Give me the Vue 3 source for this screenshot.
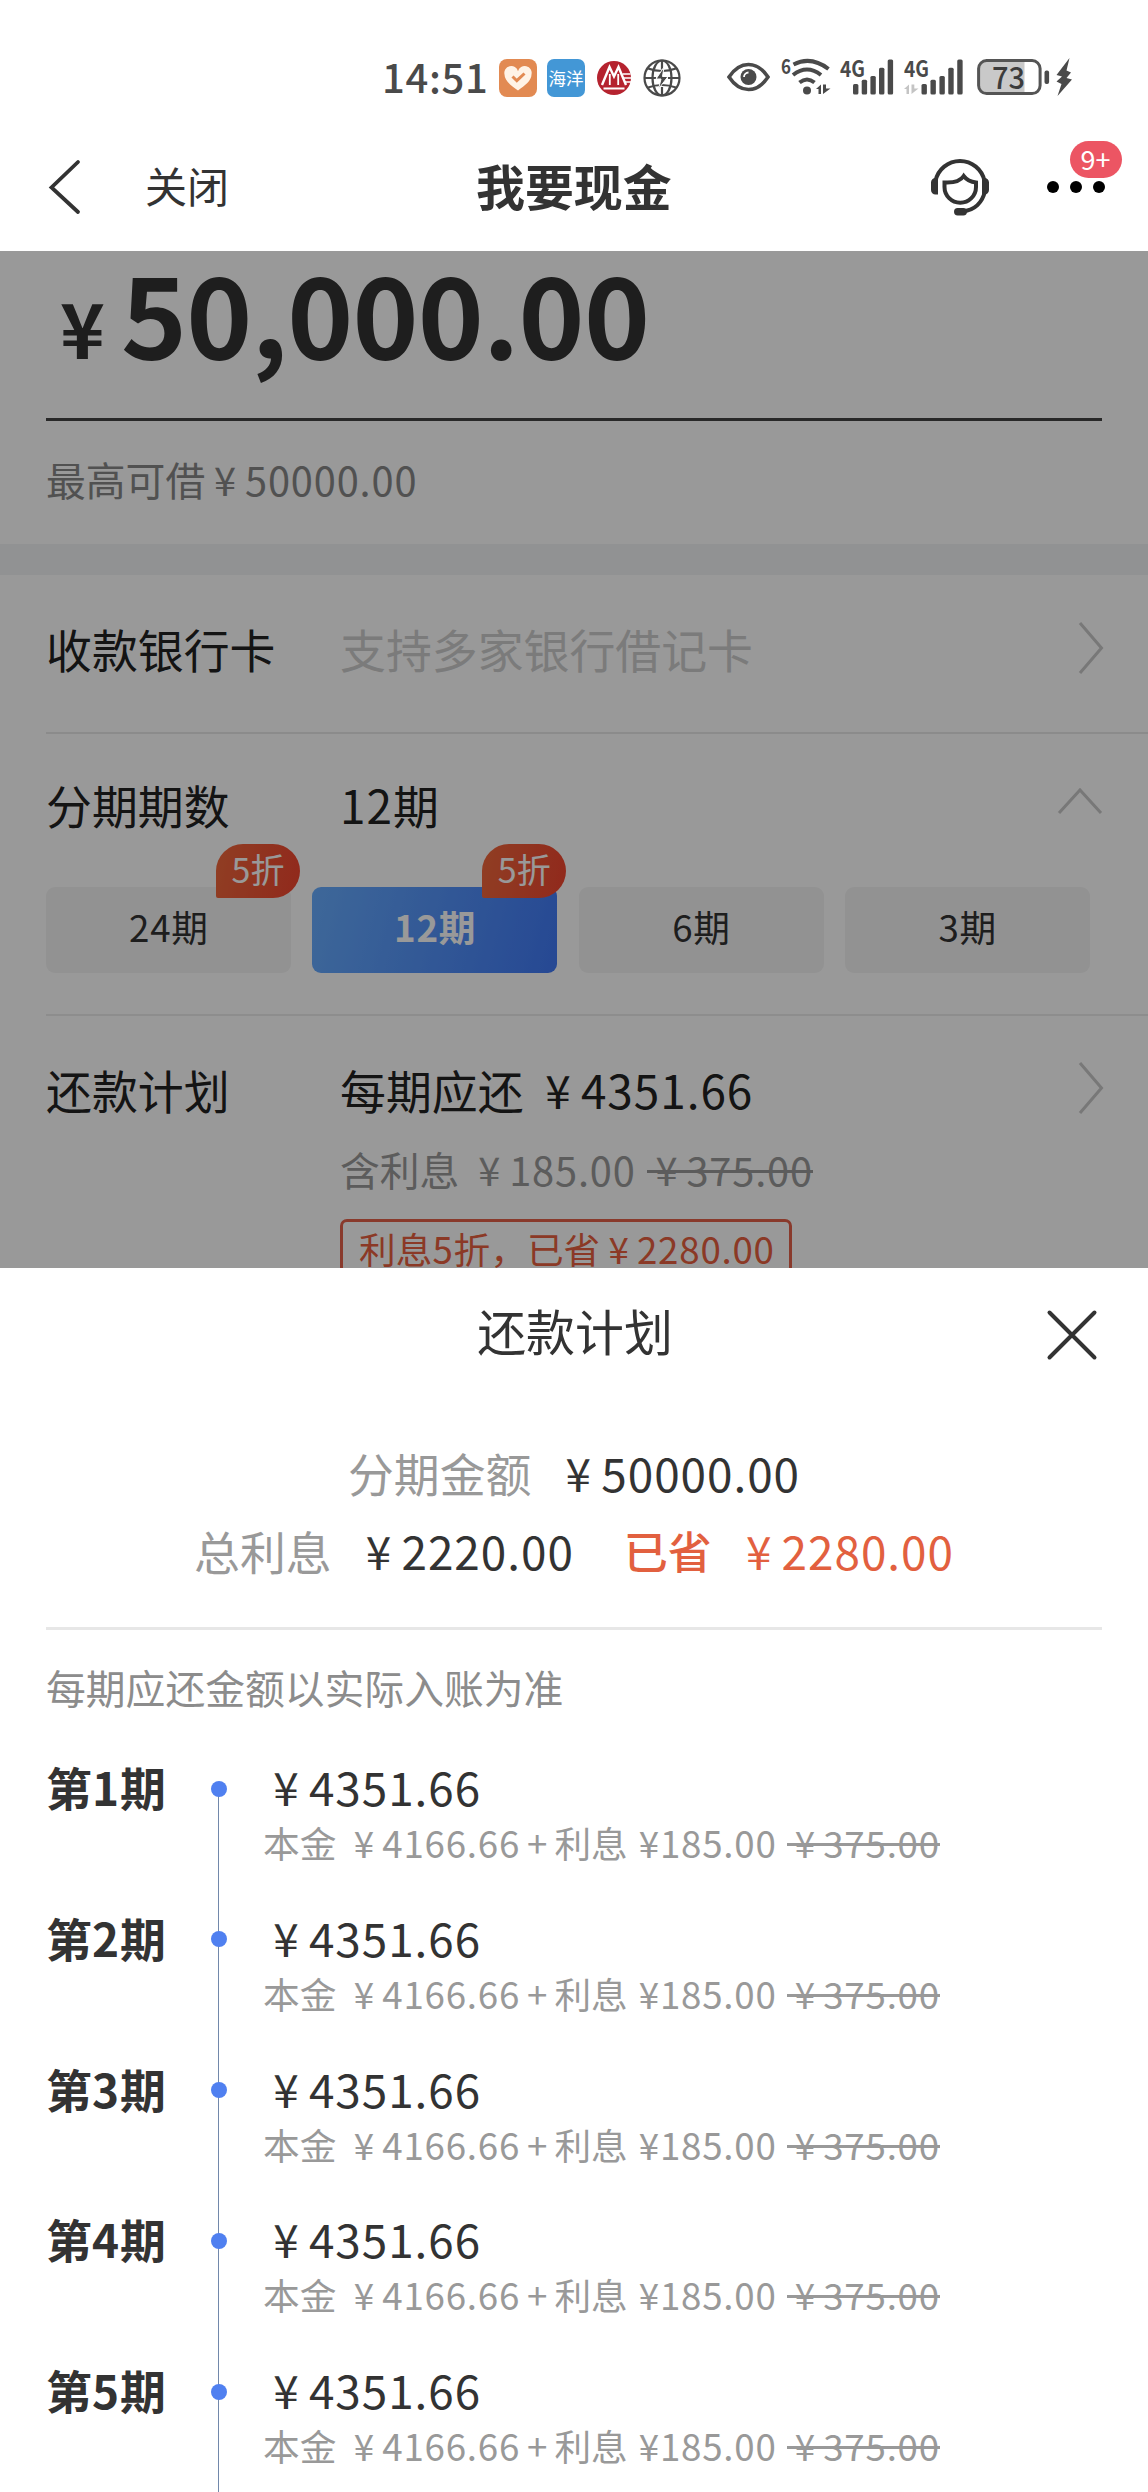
<script setup>
const terms = [
  { label: '24', off: true },
  { label: '12', off: true, active: true },
  { label: '6' },
  { label: '3' },
]
const bars = [
  [0, 24.6, 10.4],
  [8.7, 20.3, 14.7],
  [17.4, 16.6, 18.4],
  [26, 8.3, 26.7],
  [34.7, 0, 35],
]
const periods = [1, 2, 3, 4, 5]
</script>

<template>
  <div class="page">
    <header class="status">
      <span class="clock">14:51</span>
      <svg class="s-heart" width="38" height="38" viewBox="0 0 38 38">
        <rect width="38" height="38" rx="8" fill="#e28a52" />
        <path d="M19 31.5C12 26.5 5.5 21.5 5.5 15.500a6.800 6.800 0 0 1 13.500-3.200 6.800 6.800 0 0 1 13.500 3.200C32.500 21.500 26 26.500 19 31.500z" fill="#fff3e6" />
        <path d="M13.500 17.500l4.300 4.200 7.700-7.200" fill="none" stroke="#e28a52" stroke-width="3" />
      </svg>
      <span class="s-ocean">海洋</span>
      <svg class="s-bank" width="34" height="34" viewBox="0 0 34 34">
        <circle cx="17" cy="17" r="17" fill="#b5232f" />
        <path d="M5 24L12.500 6l4.500 9.500L21.500 6 29 24" fill="none" stroke="#fff" stroke-width="2.400" />
        <path d="M6.500 27.500h21M12.800 13v11M21.200 13v11" fill="none" stroke="#fff" stroke-width="1.800" />
        <path d="M25.500 13h8M26.500 17h8M28 21h6" stroke="#fff" stroke-width="1.300" />
      </svg>
      <svg class="s-globe" width="38" height="38" viewBox="0 0 38 38" fill="none" stroke="#4a4a4a" stroke-width="2.200">
        <circle cx="19" cy="19" r="17.500" />
        <ellipse cx="19" cy="19" rx="9.500" ry="17.500" />
        <path d="M19 1.500v9M19 28v8.500M1.500 19H13M25 19h11.500M5 9.500q14 5 28 0M5 28.500q14-5 28 0" />
        <path d="M21 8l-8 12h5l-2.500 10L25 17.500h-5.500z" fill="#4a4a4a" stroke="#fff" stroke-width="1" />
      </svg>
      <svg class="s-eye" width="43" height="30" viewBox="0 0 43 30">
        <path d="M2 15C8 6 14.500 2.500 21.500 2.500S35 6 41 15C35 24 28.500 27.500 21.500 27.500S8 24 2 15z" fill="none" stroke="#4a4a4a" stroke-width="3.600" />
        <circle cx="21.500" cy="15" r="8" fill="#4a4a4a" />
        <path d="M17 15a4.500 4.500 0 0 1 4.500-4.500" fill="none" stroke="#fff" stroke-width="1.800" />
      </svg>
      <svg class="s-wifi" width="50" height="38" viewBox="0 0 50 38">
        <text x="0" y="15.500" class="tiny" textLength="10" lengthAdjust="spacingAndGlyphs">6</text>
        <g fill="none" stroke="#4a4a4a" stroke-width="4">
          <path d="M12.500 6.500Q30-2.500 47.500 11" />
          <path d="M12 17Q26 6 40 17" />
          <path d="M18.500 24.500q7.500-6 15 0" />
        </g>
        <circle cx="26" cy="32.500" r="4" fill="#4a4a4a" />
        <path d="M35 31l5-4.500V36h-2.500v-5zM42 26.500V36l7.500-5.500H45v-4z" fill="#4a4a4a" />
      </svg>
      <svg class="s-cell" width="54" height="38" viewBox="0 0 54 38">
        <text x="0" y="18.500" class="net" textLength="25" lengthAdjust="spacingAndGlyphs">4G</text>
        <rect v-for="b in bars" :key="b[0]" :x="b[0] + 13" :y="b[1] + 1.500" width="5.400" :height="b[2]" rx="1.500" fill="#4a4a4a" />
      </svg>
      <svg class="s-cell2" width="60" height="38" viewBox="0 0 60 38">
        <text x="0" y="18.500" class="net" textLength="25" lengthAdjust="spacingAndGlyphs">4G</text>
        <path d="M0 31l5-4.500V36H2.500v-5zM7.500 26.500V36l7-5.500h-4.200v-4z" fill="#c4c4c4" />
        <rect v-for="b in bars" :key="b[0]" :x="b[0] * 1.03 + 17.500" :y="b[1] + 1.500" width="5.400" :height="b[2]" rx="1.500" fill="#4a4a4a" />
      </svg>
      <svg class="s-batt" width="96" height="38" viewBox="0 0 96 38">
        <path d="M10 3h37.500v32H10a7 7 0 0 1-7-7V10a7 7 0 0 1 7-7z" fill="#c9c9c9" />
        <rect x="1.600" y="2.600" width="61.500" height="33" rx="8" fill="none" stroke="#555" stroke-width="3" />
        <rect x="67.500" y="12.500" width="4.600" height="13.500" rx="2" fill="#4a4a4a" />
        <text x="31.500" y="30.500" class="pct" text-anchor="middle" textLength="33" lengthAdjust="spacingAndGlyphs">73</text>
        <path d="M92.500 0L79.500 17l5.500 1.500-5.500 5 5 2.500-4 12L95 21.500l-5.500-1.500 4.500-5.500-4.500-2z" fill="#4a4a4a" />
      </svg>
    </header>

    <nav class="nav">
      <svg class="back" width="34" height="56" viewBox="0 0 34 56">
        <path d="M31 3L4.500 28.500 31 53" fill="none" stroke="#333" stroke-width="3.800" stroke-linecap="round" />
      </svg>
      <span class="shut">关闭</span>
      <span class="nav-title">我要现金</span>
      <svg class="service" width="58" height="59" viewBox="0 0 58 59" fill="none" stroke="#333" stroke-width="4">
        <path d="M4.500 24a25 25 0 0 1 49 0" />
        <path d="M54 34c-2.500 11-10 19.500-23 20.500" />
        <path d="M13.500 25.500c9 .5 16-1.500 19.200-6.500 3 4 7 6 12.300 6.500V30a15.700 15.700 0 0 1-31.500 0z" />
        <path d="M7 21v16.500H4.500A4.500 4.500 0 0 1 0 33v-7.500A4.500 4.500 0 0 1 4.500 21zM51 21v16.500h2.500A4.500 4.500 0 0 0 58 33v-7.500a4.500 4.500 0 0 0-4.500-4.500z" fill="#333" stroke="none" />
        <rect x="23" y="51" width="13" height="7.500" rx="3.700" fill="#333" stroke="none" />
      </svg>
      <div class="more">
        <i></i><i></i><i></i>
        <span class="badge">9+</span>
      </div>
    </nav>

    <main class="behind">
      <section class="amount">
        <div class="big"><span class="yen">¥</span><span class="figure">50,000.00</span></div>
        <p class="limit">最高可借<span class="yen">¥</span><span class="n">50000.00</span></p>
      </section>
      <div class="band"></div>
      <section class="row bank">
        <span class="key">收款银行卡</span>
        <span class="hint">支持多家银行借记卡</span>
        <svg class="go" width="26" height="54" viewBox="0 0 26 54"><path d="M2 2l21.500 25L2 52" /></svg>
      </section>
      <section class="term">
        <div class="term-head">
          <span class="key">分期期数</span>
          <span class="val"><span class="n">12</span>期</span>
          <svg class="go up" width="46" height="28" viewBox="0 0 46 28"><path d="M2 26L23 3l21 23" /></svg>
        </div>
        <div class="options">
          <div v-for="t in terms" :key="t.label" class="option" :class="{ active: t.active }">
            <span class="n">{{ t.label }}</span>期
            <span v-if="t.off" class="tag">5折</span>
          </div>
        </div>
      </section>
      <section class="plan">
        <span class="key">还款计划</span>
        <div class="plan-body">
          <div class="each">每期应还<span class="yen gap">¥</span><span class="n">4351.66</span></div>
          <div class="interest">含利息<span class="yen gap">¥</span><span class="n">185.00</span><s><span class="yen">¥</span><span class="n">375.00</span></s></div>
          <div class="saved">利息<span class="n">5</span>折，已省<span class="yen">¥</span><span class="n">2280.00</span></div>
        </div>
        <svg class="go" width="26" height="54" viewBox="0 0 26 54"><path d="M2 2l21.500 25L2 52" /></svg>
      </section>
      <div class="mask"></div>
    </main>

    <section class="sheet">
      <div class="sheet-head">
        <span>还款计划</span>
        <svg class="close" width="50" height="50" viewBox="0 0 50 50">
          <path d="M2.500 2.500l45 45M47.500 2.500l-45 45" stroke="#333" stroke-width="4" stroke-linecap="round" />
        </svg>
      </div>
      <div class="summary">
        <div class="sum"><span class="muted">分期金额</span><span class="yen wide">¥</span><span class="n">50000.00</span></div>
        <div class="sum second">
          <span class="muted">总利息</span><span class="yen wide">¥</span><span class="n">2220.00</span>
          <span class="save"><b>已省</b><span class="yen wide">¥</span><span class="n">2280.00</span></span>
        </div>
      </div>
      <p class="note">每期应还金额以实际入账为准</p>
      <ol class="list">
        <li v-for="p in periods" :key="p" class="item">
          <span class="no">第<span class="n">{{ p }}</span>期</span>
          <span class="rail"><i></i></span>
          <div class="detail">
            <div class="pay"><span class="yen">¥</span><span class="n">4351.66</span></div>
            <div class="parts">本金<span class="yen gap">¥</span><span class="n">4166.66</span><span class="plus">+</span>利息<span class="n half">¥185.00</span><s><span class="yen">¥</span><span class="n">375.00</span></s></div>
          </div>
        </li>
      </ol>
    </section>
  </div>
</template>

<style>
body {
  margin: 0;
  background: #fff;
}
</style>

<style scoped>
.page {
  width: 1148px;
  height: 2492px;
  overflow: hidden;
  background: #fff;
  color: #333;
  font-family: "Noto Sans CJK SC", "Noto Sans", sans-serif;
  font-size: 45.9px;
  white-space: nowrap;
}
svg {
  display: block;
  flex: none;
  overflow: visible;
}
p,
ol {
  margin: 0;
  padding: 0;
  list-style: none;
}
.n {
  letter-spacing: 0.021em;
}
.yen {
  display: inline-block;
  width: 1em;
  text-align: center;
}
.yen.gap {
  margin-left: 0.25em;
}
.yen.wide {
  margin-left: 0.52em;
}

.status {
  display: flex;
  align-items: flex-start;
  height: 100px;
  padding-left: 382px;
  box-sizing: border-box;
  color: #4a4a4a;
}
.clock {
  width: 117px;
  margin-top: 56px;
  font-size: 40px;
  line-height: 40px;
  font-weight: 500;
  letter-spacing: 0.7px;
}
.s-heart,
.s-ocean,
.s-globe {
  margin-top: 59px;
}
.s-ocean {
  width: 38px;
  height: 38px;
  margin-left: 10px;
  border-radius: 7px;
  background: #4397d6;
  color: #fff;
  font-size: 17.500px;
  line-height: 37px;
  text-align: center;
}
.s-bank {
  margin: 61px 0 0 12px;
}
.s-globe {
  margin-left: 12px;
}
.s-eye {
  margin: 62px 0 0 46px;
}
.s-wifi {
  margin: 58px 0 0 11px;
}
.s-cell {
  margin: 58px 0 0 9px;
}
.s-cell2 {
  margin: 58px 0 0 10px;
}
.s-batt {
  margin: 58px 0 0 13px;
}
.tiny {
  font-size: 20px;
  font-weight: 700;
  fill: #4a4a4a;
}
.net {
  font-size: 22px;
  font-weight: 700;
  fill: #4a4a4a;
}
.pct {
  font-size: 31px;
  font-weight: 500;
  fill: #3c3c3c;
}

.nav {
  display: flex;
  align-items: center;
  height: 151px;
  padding: 0 42px 0 47px;
  box-sizing: border-box;
  position: relative;
}
.nav > * {
  margin-top: 22px;
}
.shut {
  margin-left: 64px;
  width: 331px;
  font-size: 42px;
  line-height: 60px;
  padding-bottom: 3px;
  box-sizing: border-box;
}
.nav-title {
  width: 455px;
  font-size: 48.900px;
  line-height: 60px;
  font-weight: 700;
  padding-bottom: 3px;
  box-sizing: border-box;
}
.more {
  display: flex;
  gap: 11.200px;
  margin-left: 57.500px;
  position: relative;
}
.more i {
  width: 12px;
  height: 12px;
  border-radius: 50%;
  background: #000;
}
.badge {
  position: absolute;
  left: 23px;
  top: -40px;
  width: 52px;
  height: 37px;
  border-radius: 19px;
  background: #ec5563;
  color: #fff;
  font-size: 27px;
  line-height: 35px;
  text-align: center;
}

.behind {
  position: relative;
  height: 1017px;
  overflow: hidden;
  background: #fff;
}
.mask {
  position: absolute;
  inset: 0;
  background: rgba(0, 0, 0, 0.4);
}
.amount {
  height: 293px;
  padding: 0 46px;
  box-sizing: border-box;
}
.big {
  display: flex;
  align-items: baseline;
  height: 170px;
  box-sizing: border-box;
  border-bottom: 3px solid #444;
  font-weight: 700;
  line-height: 118px;
}
.big .yen {
  width: 76px;
  margin-right: -1px;
  font-size: 76px;
}
.big .yen {
  text-indent: -3px;
}
.figure {
  font-size: 112px;
  letter-spacing: -0.8px;
}
.limit {
  padding-top: 30px;
  font-size: 39.800px;
  line-height: 56px;
  color: #888;
}
.band {
  height: 31px;
  background: #f2f3f6;
}
.row,
.term-head {
  display: flex;
  align-items: center;
}
.key {
  width: 294px;
  color: #222;
}
.val,
.each {
  color: #222;
}
.row .key,
.term-head .key,
.row .hint,
.term-head .val {
  line-height: 60px;
}
.hint {
  color: #cdcdcd;
}
.go {
  margin-left: auto;
  fill: none;
  stroke: #c8c8c8;
  stroke-width: 3;
}
.go.up {
  margin-bottom: 7px;
  margin-right: 1px;
}
.bank {
  height: 159px;
  margin-left: 46px;
  padding-right: 44px;
  padding-bottom: 11px;
  box-sizing: border-box;
  border-bottom: 2px solid #e8e8e8;
}
.term {
  height: 282px;
  margin-left: 46px;
  box-sizing: border-box;
  border-bottom: 2px solid #ececec;
}
.term-head {
  height: 153px;
  padding-right: 44px;
  padding-bottom: 13px;
  box-sizing: border-box;
}
.options {
  display: flex;
  gap: 21.300px;
}
.option {
  position: relative;
  width: 245px;
  height: 86px;
  border-radius: 9px;
  background: #f4f4f4;
  font-size: 36.700px;
  line-height: 79px;
  text-align: center;
  color: #333;
}
.option.active {
  background: linear-gradient(105deg, #68adff, #4079f6);
  color: #fff;
  font-weight: 700;
}
.tag {
  position: absolute;
  right: -9px;
  top: -43px;
  width: 84px;
  height: 54px;
  border-radius: 27px 27px 27px 2px;
  background: linear-gradient(100deg, #f0683c, #f2452f);
  color: #fff;
  font-size: 34px;
  line-height: 49px;
  font-weight: 400;
}
.plan {
  display: flex;
  align-items: flex-start;
  padding: 41px 44px 0 46px;
  line-height: 64px;
}
.plan .go {
  margin-top: 4px;
}
.interest {
  margin-top: 18px;
  font-size: 39.800px;
  line-height: 60px;
  color: #999;
}
s {
  position: relative;
  display: inline-block;
  text-decoration: none;
}
s::after {
  content: "";
  position: absolute;
  left: 0;
  right: 0;
  top: 52%;
  height: 3px;
  background: currentColor;
}
.interest s {
  margin-left: 11px;
}
.saved {
  display: inline-block;
  margin-top: 20px;
  padding: 0 14px 0 16px;
  height: 64px;
  border: 3px solid #e4614a;
  border-radius: 7px;
  font-size: 36.700px;
  line-height: 52px;
  color: #e85f40;
}

.sheet {
  height: 1224px;
  overflow: hidden;
  background: #fff;
}
.sheet-head {
  position: relative;
  height: 135px;
  padding-left: 2px;
  line-height: 123px;
  text-align: center;
  font-size: 48.900px;
}
.close {
  position: absolute;
  right: 51px;
  top: 42px;
}
.summary {
  height: 227px;
  margin: 0 46px;
  box-sizing: border-box;
  padding-top: 36px;
  border-bottom: 3px solid #e7e7e7;
}
.sum {
  display: flex;
  justify-content: center;
  line-height: 67px;
}
.second {
  margin-top: 11px;
}
.muted {
  color: #999;
}
.save {
  display: flex;
  margin-left: 50px;
  color: #e2603f;
}
.save b {
  font-weight: 500;
  font-size: 44px;
}
.note {
  padding: 27px 46px 0;
  font-size: 39.800px;
  line-height: 60px;
  color: #8c8c8c;
}
.list {
  padding: 37px 0 0 46px;
}
.item {
  display: flex;
  height: 150.800px;
}
.no {
  width: 164px;
  font-weight: 700;
  line-height: 64px;
}
.rail {
  position: relative;
  width: 18px;
  flex: none;
}
.rail::before {
  content: "";
  position: absolute;
  left: 7.500px;
  top: 34px;
  width: 1.500px;
  height: 151px;
  background: #7288ab;
}
.rail i {
  position: absolute;
  left: 1px;
  top: 26.500px;
  width: 16px;
  height: 16px;
  border-radius: 50%;
  background: #5080f0;
}
.detail {
  margin-left: 35px;
}
.pay {
  line-height: 64px;
}
.parts {
  font-size: 36.700px;
  line-height: 48px;
  color: #999;
}
.plus {
  margin: 0 7px;
}
.half {
  margin-left: 11px;
}
.parts s {
  margin-left: 10px;
}
</style>
